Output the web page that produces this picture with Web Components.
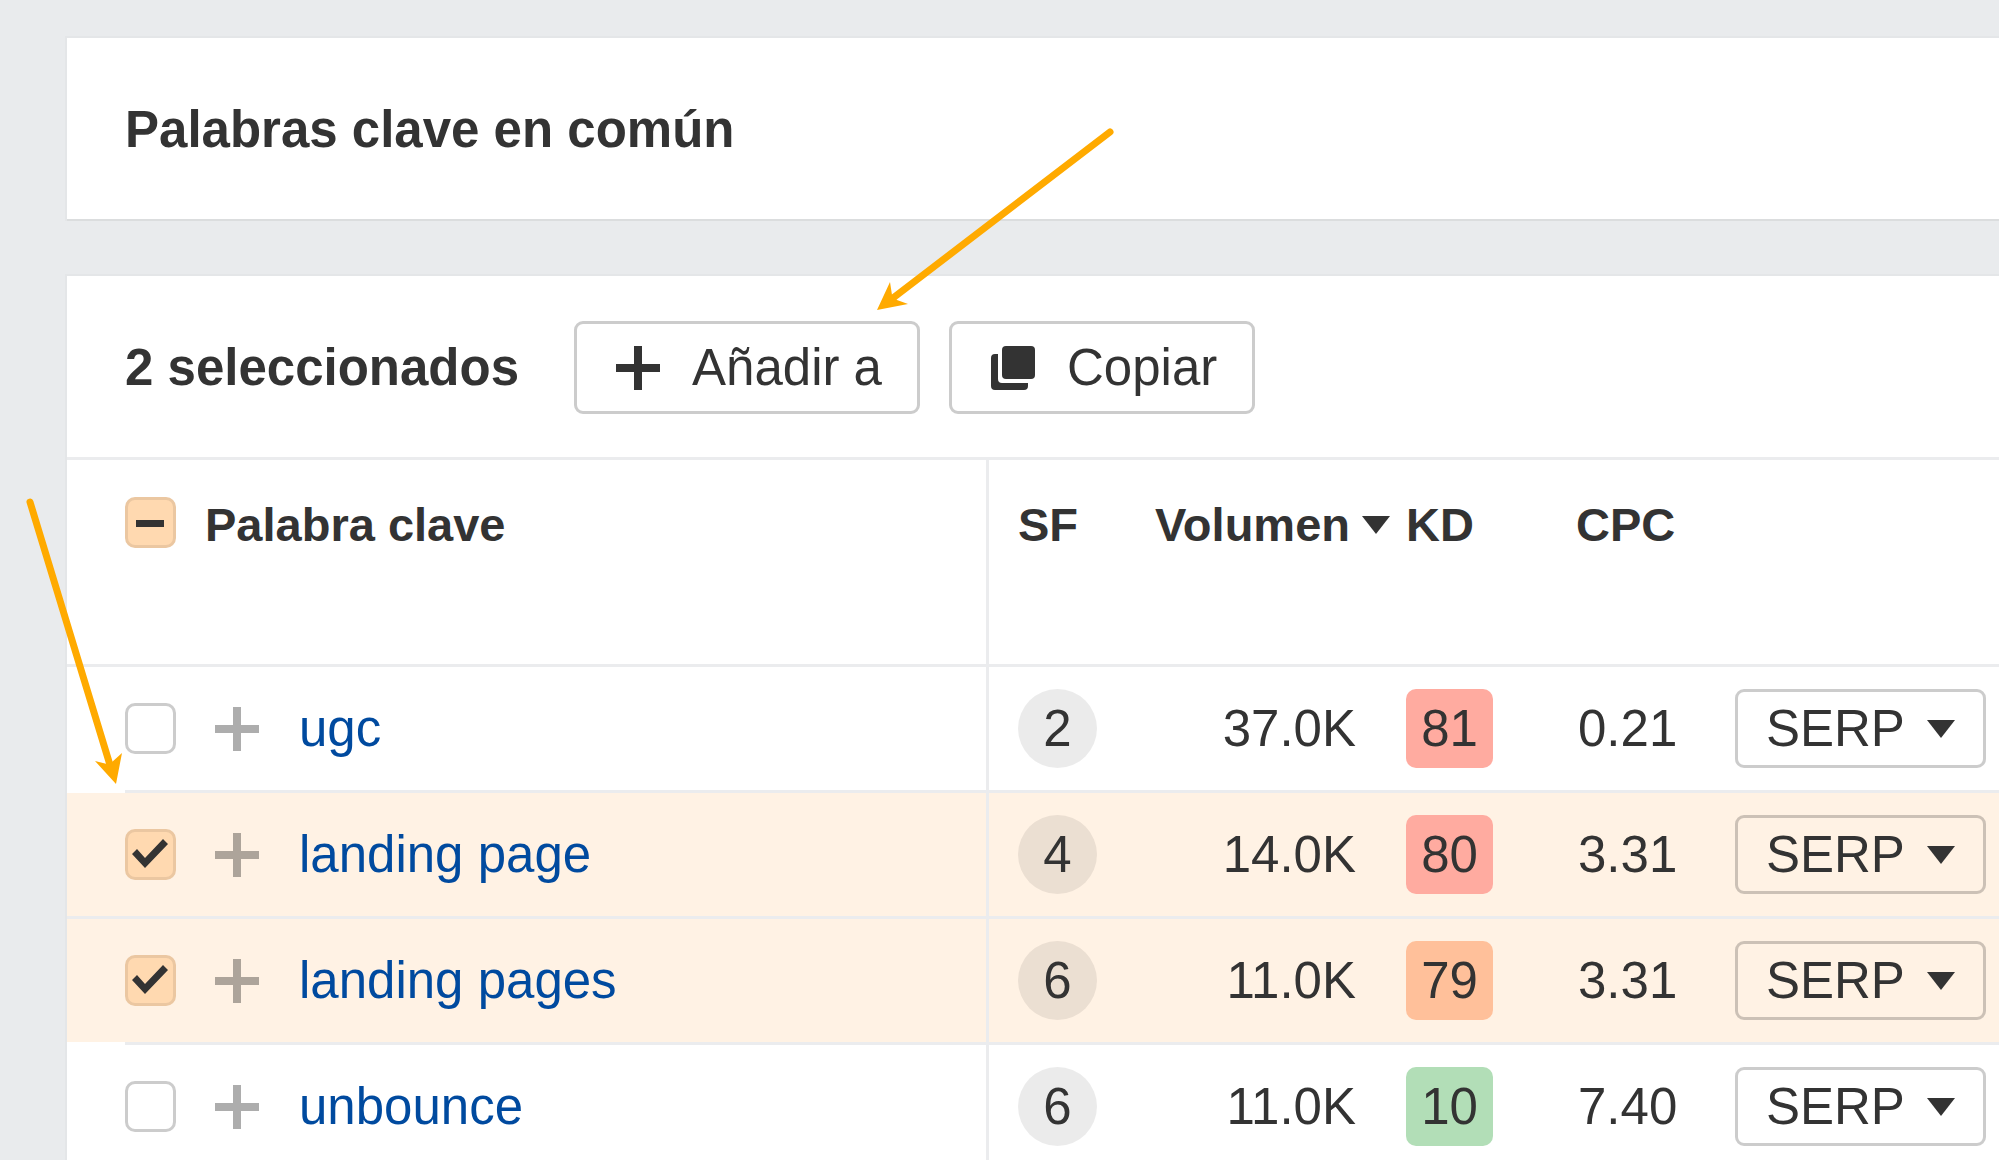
<!DOCTYPE html>
<html lang="es">
<head>
<meta charset="utf-8">
<title>Palabras clave en común</title>
<style>
:root {
    --color-page: #e9ebed;
    --color-card: #ffffff;
    --color-line: #ebecee;
    --color-text: #333333;
    --color-link: #004a9f;
    --color-selected: #fff2e4;
    --color-check: #ffd9b0;
    --color-arrow: #ffaa00;
    --font-size-base: 51px;
    --font-size-head: 47px;
    --gutter: 58px;
}

body {
    margin: 0;
    background: var(--color-page);
    color: var(--color-text);
    font-family: "Liberation Sans", Arial, sans-serif;
    font-size: var(--font-size-base);
    line-height: 61px;
}
</style>
</head>
<body>
<keywords-page>
    <ui-card>
        <section-title>Palabras clave en común</section-title>
    </ui-card>
    <ui-card>
        <selection-bar count="2">
            <icon-button icon="plus">Añadir a</icon-button>
            <icon-button icon="copy">Copiar</icon-button>
        </selection-bar>
        <keyword-table></keyword-table>
    </ui-card>
    <pointer-arrows slot="overlay"></pointer-arrows>
</keywords-page>

<script>
const icons = {
    plus: '<svg width="44" height="44" viewBox="0 0 44 44" aria-hidden="true"><path fill="currentColor" d="M18 0h8v18h18v8H26v18h-8V26H0v-8h18z"/></svg>',
    copy: '<svg width="44" height="44" viewBox="0 0 44 44" aria-hidden="true"><rect fill="currentColor" x="11" y="0" width="33" height="33" rx="4"/><path fill="currentColor" d="M4 8h3v25a4 4 0 0 0 4 4h26v3a4 4 0 0 1-4 4H4a4 4 0 0 1-4-4V12a4 4 0 0 1 4-4z"/></svg>',
    caret: '<svg width="28" height="18" viewBox="0 0 28 18" aria-hidden="true"><path fill="currentColor" d="M0 0h28L14 18z"/></svg>',
};

const keywords = [
    { keyword: 'ugc', sf: 2, volume: '37.0K', kd: 81, level: 'hard', cpc: '0.21', selected: false },
    { keyword: 'landing page', sf: 4, volume: '14.0K', kd: 80, level: 'hard', cpc: '3.31', selected: true },
    { keyword: 'landing pages', sf: 6, volume: '11.0K', kd: 79, level: 'medium', cpc: '3.31', selected: true },
    { keyword: 'unbounce', sf: 6, volume: '11.0K', kd: 10, level: 'easy', cpc: '7.40', selected: false },
];

class BaseElement extends HTMLElement {
    constructor() {
        super();
        this.attachShadow({ mode: 'open' });
    }

    connectedCallback() {
        this.shadowRoot.innerHTML = this.render();
        this.setListeners();
    }

    setListeners() {}
}

class KeywordsPage extends BaseElement {
    render() {
        return `
<style>
:host {
    display: block;
    position: relative;
    height: 100vh;
    overflow: hidden;
}

main {
    display: flex;
    flex-direction: column;
    gap: 57px;
    padding: 38px 0 0 67px;
}
</style>
<main><slot></slot></main>
<slot name='overlay'></slot>
`;
    }
}

class UiCard extends BaseElement {
    render() {
        return `
<style>
:host {
    display: block;
    background: var(--color-card);
    box-shadow: 0 2px 0 rgba(0, 0, 0, .04), 0 0 0 2px rgba(0, 0, 0, .02);
}
</style>
<slot></slot>
`;
    }
}

class SectionTitle extends BaseElement {
    render() {
        return `
<style>
:host {
    display: block;
    padding: 61px var(--gutter) 59px;
}

h1 {
    margin: 0;
    font-size: inherit;
    font-weight: bold;
}
</style>
<h1><slot></slot></h1>
`;
    }
}

class SelectionBar extends BaseElement {
    render() {
        return `
<style>
:host {
    display: flex;
    align-items: center;
    gap: 29px;
    padding: 45px var(--gutter) 43px;
    border-bottom: 3px solid var(--color-line);
}

strong {
    padding-right: 26px;
    white-space: nowrap;
}
</style>
<strong>${this.getAttribute('count')} seleccionados</strong>
<slot></slot>
`;
    }
}

class IconButton extends BaseElement {
    render() {
        return `
<style>
:host {
    display: block;
}

button {
    display: flex;
    align-items: center;
    gap: 32px;
    height: 93px;
    padding: 0 35px 0 39px;
    border: 3px solid #cccccc;
    border-radius: 9px;
    background: none;
    color: inherit;
    font: inherit;
    white-space: nowrap;
    cursor: pointer;
}
</style>
<button type='button'>${icons[this.getAttribute('icon')]}<span><slot></slot></span></button>
`;
    }
}

class UiCheck extends BaseElement {
    render() {
        let state = this.getAttribute('state');
        return `
<style>
:host {
    display: block;
    width: 51px;
    height: 51px;
}

div {
    display: grid;
}

input,
svg {
    grid-area: 1 / 1;
    box-sizing: border-box;
    width: 51px;
    height: 51px;
    margin: 0;
}

input {
    appearance: none;
    border: 3px solid #cccccc;
    border-radius: 10px;
    background: var(--color-card);
    cursor: pointer;
}

input:checked,
input:indeterminate {
    border-color: #ebc7a1;
    background: var(--color-check);
}

svg {
    pointer-events: none;
    visibility: hidden;
}

input:checked ~ .tick,
input:indeterminate ~ .dash {
    visibility: visible;
}
</style>
<div>
    <input type='checkbox' aria-label='${this.getAttribute('label')}' ${state === 'on' ? 'checked' : ''}>
    <svg class='tick' viewBox='0 0 51 51' aria-hidden='true'><path fill='currentColor' d='M7 25l5-5 8 9 18-19 5 5-23 24z'/></svg>
    <svg class='dash' viewBox='0 0 51 51' aria-hidden='true'><path fill='currentColor' d='M11 23h28v7H11z'/></svg>
</div>
`;
    }

    setListeners() {
        if (this.getAttribute('state') === 'mixed') {
            this.shadowRoot.querySelector('input').indeterminate = true;
        }
    }
}

class SfCount extends BaseElement {
    render() {
        return `
<style>
:host {
    display: flex;
    align-items: center;
    justify-content: center;
    width: 79px;
    height: 79px;
    border-radius: 50%;
    background: rgba(0, 0, 0, .08);
}
</style>
<slot></slot>
`;
    }
}

class KdBadge extends BaseElement {
    render() {
        return `
<style>
:host {
    display: flex;
    align-items: center;
    justify-content: center;
    box-sizing: border-box;
    width: 87px;
    height: 79px;
    border-radius: 10px;
}

:host([level='hard']) { background: #ffaba0; }
:host([level='medium']) { background: #ffc09a; }
:host([level='easy']) { background: #b2deb7; }
</style>
<slot></slot>
`;
    }
}

class SerpButton extends BaseElement {
    render() {
        return `
<style>
:host {
    display: block;
}

button {
    display: flex;
    align-items: center;
    gap: 22px;
    height: 79px;
    padding: 0 28px;
    border: 3px solid rgba(0, 0, 0, .2);
    border-radius: 9px;
    background: none;
    color: inherit;
    font: inherit;
    cursor: pointer;
}
</style>
<button type='button' aria-haspopup='true'><span>SERP</span>${icons.caret}</button>
`;
    }
}

class KeywordTable extends BaseElement {
    row(item) {
        return `
<tr class='${item.selected ? 'selected' : ''}'>
    <td class='edge'></td>
    <td><ui-check label='${item.keyword}' state='${item.selected ? 'on' : 'off'}'></ui-check></td>
    <td class='expand'><button type='button' aria-label='Añadir ${item.keyword}'>${icons.plus}</button></td>
    <td class='keyword'><a href='#'>${item.keyword}</a></td>
    <td class='sf'><sf-count>${item.sf}</sf-count></td>
    <td class='volume'>${item.volume}</td>
    <td class='kd'><kd-badge level='${item.level}'>${item.kd}</kd-badge></td>
    <td class='cpc'>${item.cpc}</td>
    <td class='serp'><serp-button></serp-button></td>
</tr>`;
    }

    render() {
        return `
<style>
:host {
    display: block;
}

table {
    width: 100%;
    table-layout: fixed;
    border-collapse: separate;
    border-spacing: 0;
}

.col-edge { width: 58px; }
.col-check { width: 80px; }
.col-expand { width: 94px; }
.col-sf { width: 139px; }
.col-volume { width: 249px; }
.col-kd { width: 144px; }
.col-cpc { width: 185px; }
.col-serp { width: 293px; }

th,
td {
    box-sizing: border-box;
    padding: 0;
    border-bottom: 3px solid var(--color-line);
    text-align: left;
    white-space: nowrap;
}

th {
    height: 207px;
    padding-top: 37px;
    vertical-align: top;
    font-size: var(--font-size-head);
    line-height: 55px;
}

td {
    height: 126px;
    vertical-align: middle;
}

.keyword {
    border-right: 3px solid var(--color-line);
}

.selected td {
    background: var(--color-selected);
    background-clip: padding-box;
}

/* the divider runs to the card's edge only between two selected rows */
td.edge {
    border-bottom-color: transparent;
}

.selected:has(+ .selected) .edge {
    border-bottom-color: var(--color-line);
}

.expand button {
    display: flex;
    padding: 0 10px;
    border: 0;
    background: none;
    color: rgba(0, 0, 0, .32);
    cursor: pointer;
}

a {
    color: var(--color-link);
    text-decoration: none;
}

.sf { padding-left: 29px; }
td.volume { padding-right: 21px; text-align: right; }
.kd { padding-left: 29px; }
th.cpc { padding-left: 55px; }
td.cpc { padding-left: 57px; }
.serp { padding-left: 29px; }

th.volume button {
    display: flex;
    align-items: center;
    gap: 12px;
    padding: 0;
    padding-left: 27px;
    border: 0;
    background: none;
    color: inherit;
    font: inherit;
    cursor: pointer;
}
</style>
<table>
    <colgroup>
        <col class='col-edge'><col class='col-check'><col class='col-expand'><col>
        <col class='col-sf'><col class='col-volume'><col class='col-kd'><col class='col-cpc'><col class='col-serp'>
    </colgroup>
    <thead>
        <tr>
            <th></th>
            <th><ui-check label='Seleccionar todo' state='mixed'></ui-check></th>
            <th class='keyword' colspan='2'>Palabra clave</th>
            <th class='sf'>SF</th>
            <th class='volume' aria-sort='descending'><button type='button'>Volumen${icons.caret}</button></th>
            <th class='kd'>KD</th>
            <th class='cpc'>CPC</th>
            <th></th>
        </tr>
    </thead>
    <tbody>${keywords.map((item) => this.row(item)).join('')}</tbody>
</table>
`;
    }
}

class PointerArrows extends BaseElement {
    render() {
        return `
<style>
:host {
    position: absolute;
    top: 0;
    left: 0;
    pointer-events: none;
}

svg {
    display: block;
}

line {
    stroke: var(--color-arrow);
    stroke-width: 7px;
    stroke-linecap: round;
}

path {
    fill: var(--color-arrow);
}
</style>
<svg width='1200' height='800' viewBox='0 0 1200 800' aria-hidden='true'>
    <line x1='1110' y1='132' x2='893' y2='298'/>
    <path d='M877 310L890 282L892 295L897 300L908 304z'/>
    <line x1='30' y1='502' x2='110' y2='765'/>
    <path d='M116 784L95 761L107 764L112 762L122 753z'/>
</svg>
`;
    }
}

window.customElements.define('keywords-page', KeywordsPage);
window.customElements.define('ui-card', UiCard);
window.customElements.define('section-title', SectionTitle);
window.customElements.define('selection-bar', SelectionBar);
window.customElements.define('icon-button', IconButton);
window.customElements.define('ui-check', UiCheck);
window.customElements.define('sf-count', SfCount);
window.customElements.define('kd-badge', KdBadge);
window.customElements.define('serp-button', SerpButton);
window.customElements.define('keyword-table', KeywordTable);
window.customElements.define('pointer-arrows', PointerArrows);
</script>
</body>
</html>
